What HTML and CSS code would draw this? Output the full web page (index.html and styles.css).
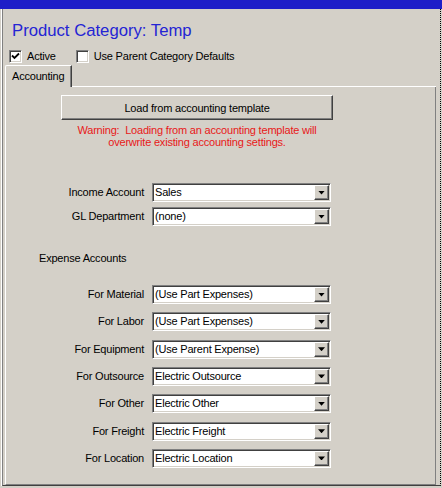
FILE: index.html
```html
<!DOCTYPE html>
<html lang="en">
<head>
    <meta charset="UTF-8">
    <meta name="viewport" content="width=device-width, initial-scale=1.0">
    <title>Product Category</title>
    <link rel="stylesheet" href="styles.css">
</head>
<body>
    <div class="caption"></div>
    <div class="window">
        <h1 class="title">Product Category: Temp</h1>

        <!-- Flags del producto -->
        <div class="flags">
            <label class="check">
                <span class="box">
                    <svg width="9" height="9" viewBox="0 0 9 9"><path d="M1 3.5 L3.5 6 L8 1.5" fill="none" stroke="#000" stroke-width="1.8"/></svg>
                </span>
                Active
            </label>
            <label class="check">
                <span class="box"></span>
                Use Parent Category Defaults
            </label>
        </div>

        <div class="tabstrip">
            <div class="tab">Accounting</div>
            <div class="tab-fill"></div>
        </div>

        <div class="panel">
            <button class="load">Load from accounting template</button>
            <p class="warning">Warning:&nbsp; Loading from an accounting template will<br>overwrite existing accounting settings.</p>

            <div class="fields">
                <span class="label">Income Account</span>
                <div class="combo"><span class="value">Sales</span><span class="drop"></span></div>
                <span class="label">GL Department</span>
                <div class="combo"><span class="value">(none)</span><span class="drop"></span></div>
            </div>

            <div class="section">Expense Accounts</div>

            <div class="fields expense">
                <span class="label">For Material</span>
                <div class="combo"><span class="value">(Use Part Expenses)</span><span class="drop"></span></div>
                <span class="label">For Labor</span>
                <div class="combo"><span class="value">(Use Part Expenses)</span><span class="drop"></span></div>
                <span class="label">For Equipment</span>
                <div class="combo"><span class="value">(Use Parent Expense)</span><span class="drop"></span></div>
                <span class="label">For Outsource</span>
                <div class="combo"><span class="value">Electric Outsource</span><span class="drop"></span></div>
                <span class="label">For Other</span>
                <div class="combo"><span class="value">Electric Other</span><span class="drop"></span></div>
                <span class="label">For Freight</span>
                <div class="combo"><span class="value">Electric Freight</span><span class="drop"></span></div>
                <span class="label">For Location</span>
                <div class="combo"><span class="value">Electric Location</span><span class="drop"></span></div>
            </div>
        </div>
    </div>
</body>
</html>
```

FILE: styles.css
```css
body {
    margin: 0;
    background-color: #d4d0c8;
    font-family: "Liberation Sans", Arial, sans-serif;
    font-size: 11px;
    letter-spacing: -0.2px;
    color: #000;
}
.caption {
    height: 9px;
    background-color: #1e1ec8;
}
.window {
    box-sizing: border-box;
    display: flex;
    flex-direction: column;
    width: 439px;
    height: 477px;
    margin-left: 2px;
    border-left: 1px solid #808080;
    border-right: 1px dotted #000;
    border-bottom: 1px solid #404040;
    box-shadow: -1px 0 0 #fff;
}
.title {
    margin: 12px 0 0 9px;
    font-size: 16.7px;
    font-weight: normal;
    line-height: 20px;
    letter-spacing: 0;
    color: #2424d4;
}
.flags {
    display: flex;
    gap: 20px;
    margin: 9px 0 0 6px;
    line-height: 13px;
}
.check {
    display: flex;
    align-items: center;
    gap: 5px;
}
.box {
    box-sizing: border-box;
    display: flex;
    align-items: center;
    justify-content: center;
    width: 13px;
    height: 13px;
    background-color: #fff;
    border: 1px solid;
    border-color: #808080 #fff #fff #808080;
    box-shadow: inset 1px 1px 0 #404040, inset -1px -1px 0 #d4d0c8;
}
.tabstrip {
    display: flex;
    height: 22px;
    margin: 2px 4px 0 2px;
}
.tab {
    box-sizing: border-box;
    width: 67px;
    padding: 4px 0 0 6px;
    line-height: 13px;
    border-top: 1px solid #fff;
    border-left: 1px solid #fff;
    border-right: 1px solid #404040;
    border-top-left-radius: 2px;
    box-shadow: inset -1px 0 0 #808080;
}
.tab-fill {
    flex: 1;
    border-bottom: 1px solid #fff;
}
.panel {
    flex: 1;
    margin: 0 4px 0 2px;
    padding-top: 8px;
    border-left: 1px solid #fff;
    border-right: 1px solid #808080;
    border-bottom: 1px solid #808080;
}
.load {
    display: block;
    box-sizing: border-box;
    width: 272px;
    height: 25px;
    margin-left: 55px;
    padding: 0;
    background-color: #d4d0c8;
    font: inherit;
    letter-spacing: inherit;
    color: #000;
    border: 1px solid;
    border-color: #fff #404040 #404040 #fff;
    box-shadow: inset -1px -1px 0 #808080;
}
.warning {
    width: 272px;
    margin: 4px 0 0 55px;
    text-align: center;
    line-height: 12px;
    color: #e81818;
}
.fields {
    display: grid;
    grid-template-columns: 138px 179px;
    grid-auto-rows: 19px;
    column-gap: 8px;
    row-gap: 5px;
    align-items: center;
    margin-top: 35px;
}
.label {
    text-align: right;
    line-height: 19px;
}
.combo {
    box-sizing: border-box;
    display: flex;
    height: 19px;
    padding: 1px;
    background-color: #fff;
    border: 1px solid;
    border-color: #808080 #fff #fff #808080;
    box-shadow: inset 1px 1px 0 #404040, inset -1px -1px 0 #d4d0c8;
}
.value {
    flex: 1;
    padding-left: 1px;
    line-height: 15px;
    white-space: nowrap;
}
.drop {
    box-sizing: border-box;
    display: flex;
    align-items: center;
    justify-content: center;
    width: 15px;
    background-color: #d4d0c8;
    border: 1px solid;
    border-color: #fff #404040 #404040 #fff;
    box-shadow: inset -1px -1px 0 #808080;
}
.drop::after {
    content: "";
    width: 7px;
    height: 4px;
    background-color: #000;
    clip-path: polygon(0 0, 100% 0, 50% 100%);
}
.section {
    margin: 26px 0 0 33px;
    line-height: 13px;
}
.expense {
    margin-top: 20px;
    row-gap: 8.33px;
}
```
